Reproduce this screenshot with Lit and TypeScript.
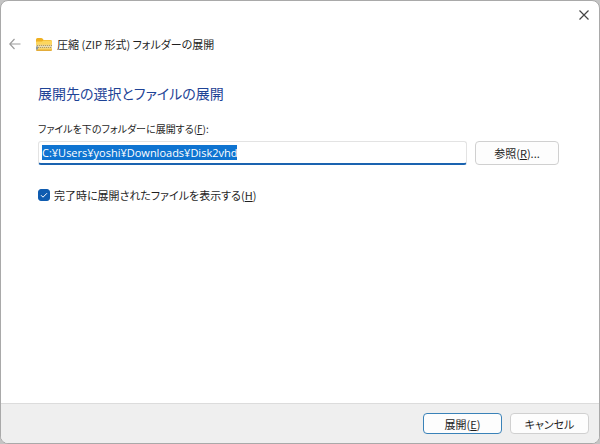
import { LitElement, html, css, svg } from "lit";
import { customElement, property, query } from "lit/decorators.js";

const folderIcon = svg`
  <path d="M0 2.5Q0 1 1.5 1H5.2Q6 1 6.5 1.6L7.6 3H14.5Q16 3 16 4.5V6H0Z" fill="#efb020"/>
  <path d="M0 5.2Q0 4.6 .7 4.6H6L7.4 3.4H14.8Q16 3.4 16 4.6V12.6Q16 14 14.6 14H1.4Q0 14 0 12.6Z" fill="#fcd65e"/>
  <path d="M0 12.4Q0 14 1.4 14H14.6Q16 14 16 12.4V12.6H0Z" fill="#e3ac3a"/>
  <path d="M0 7.5H16V11.5H0Z" fill="#f0d284"/>
  <path d="M1 8.5H16M2 10.5H16" stroke="#a89a6c" stroke-width="1" stroke-dasharray="1 1"/>
  <path d="M0 9.5H16" stroke="#e6dcb8" stroke-width="1"/>
  <path d="M1 9.5V12.5" stroke="#8e9aa3" stroke-width="2"/>`;

@customElement("app-root")
export class AppRoot extends LitElement {
  @property() path = "C:¥Users¥yoshi¥Downloads¥Disk2vhd";
  @query(".path") pathInput!: HTMLInputElement;

  static styles = css`
    :host {
      display: block;
      background: #c4c4c4;
      color: #1f1f1f;
      font: 11px/20px "Noto Sans CJK JP", sans-serif;
      font-feature-settings: "palt";
    }
    * { box-sizing: border-box; }
    .window {
      display: flex;
      flex-direction: column;
      min-height: 100vh;
      background: #fff;
      border: 1px solid #a9a9a9;
      border-radius: 8px;
      overflow: hidden;
    }
    button {
      font: inherit;
      font-feature-settings: inherit;
      color: inherit;
      padding: 0;
    }
    svg { display: block; fill: none; }
    .titlebar { display: flex; justify-content: flex-end; height: 28px; }
    .icon-button {
      display: grid;
      place-items: center;
      border: 0;
      background: none;
    }
    .close { width: 30px; height: 28px; }
    .header { display: flex; align-items: center; height: 30px; padding-left: 6px; }
    .back { width: 16px; height: 16px; }
    .folder { margin: 0 5px 0 13px; }
    .title { margin: 0; font-size: 11px; font-weight: 400; }
    .content { flex: 1; padding: 22px 40px 20px 37px; }
    h2 {
      margin: 0 0 14px;
      font-size: 14px;
      line-height: 24px;
      font-weight: 400;
      color: #1e4396;
    }
    .field-label { display: block; margin-bottom: 2px; font-size: 10px; }
    .row { display: flex; align-items: center; gap: 8px; }
    .path {
      flex: 1;
      min-width: 0;
      height: 24px;
      padding: 0 3px;
      border: 1px solid #e3e3e3;
      border-bottom: 2px solid #1a63b0;
      border-radius: 3px;
      outline: none;
      background: #fff;
      color: #1f1f1f;
      font: 11px/16px "Open Sans", "Noto Sans CJK JP", sans-serif;
    }
    .path::selection { background: #0f74d1; color: #fff; }
    .button {
      border: 1px solid #d0d0d0;
      border-radius: 4px;
      background: #fdfdfd;
    }
    .browse { width: 84px; height: 24px; }
    .check { display: flex; align-items: center; gap: 4px; margin-top: 20px; }
    .check input {
      appearance: none;
      width: 12px;
      height: 12px;
      margin: 0;
      border: 1px solid #868686;
      border-radius: 3px;
      background: #fff;
    }
    .check input:checked {
      border-color: #0f5cb0;
      background: #0f5cb0;
    }
    .box { display: grid; }
    .box > * { grid-area: 1 / 1; }
    .box svg { pointer-events: none; }
    .footer {
      display: flex;
      justify-content: flex-end;
      gap: 8px;
      padding: 9px 10px;
      border-top: 1px solid #dcdcdc;
      background: #efefef;
    }
    .footer .button { width: 79px; height: 21px; line-height: 18px; }
    .footer .primary { border-color: #3a82b8; }
  `;

  firstUpdated() {
    this.pathInput.focus();
    this.pathInput.select();
  }

  render() {
    return html`
      <main class="window" lang="ja">
        <div class="titlebar">
          <button class="icon-button close" aria-label="閉じる">
            <svg width="10" height="10" viewBox="0 0 10 10">
              <path d="M.5 .5L9.5 9.5M9.5 .5L.5 9.5" stroke="#444" stroke-width="1.2" />
            </svg>
          </button>
        </div>
        <header class="header">
          <button class="icon-button back" aria-label="戻る">
            <svg width="12" height="12" viewBox="0 0 12 12">
              <path d="M11.5 6H1M5.5 1L.8 6L5.5 11" stroke="#9c9c9c" stroke-width="1.2" />
            </svg>
          </button>
          <svg class="folder" width="16" height="15" viewBox="0 0 16 15">${folderIcon}</svg>
          <h1 class="title">圧縮 (ZIP 形式) フォルダーの展開</h1>
        </header>
        <section class="content">
          <h2>展開先の選択とファイルの展開</h2>
          <label class="field-label" for="path">ファイルを下のフォルダーに展開する(<u>F</u>):</label>
          <div class="row">
            <input class="path" id="path" type="text" spellcheck="false" .value=${this.path} />
            <button class="button browse">参照(<u>R</u>)...</button>
          </div>
          <label class="check">
            <span class="box">
              <input type="checkbox" checked />
              <svg width="12" height="12" viewBox="0 0 12 12">
                <path d="M3 6.2L5 8.2L9 4.2" stroke="#fff" stroke-width="1" />
              </svg>
            </span>
            <span>完了時に展開されたファイルを表示する(<u>H</u>)</span>
          </label>
        </section>
        <footer class="footer">
          <button class="button primary">展開(<u>E</u>)</button>
          <button class="button">キャンセル</button>
        </footer>
      </main>
    `;
  }
}
